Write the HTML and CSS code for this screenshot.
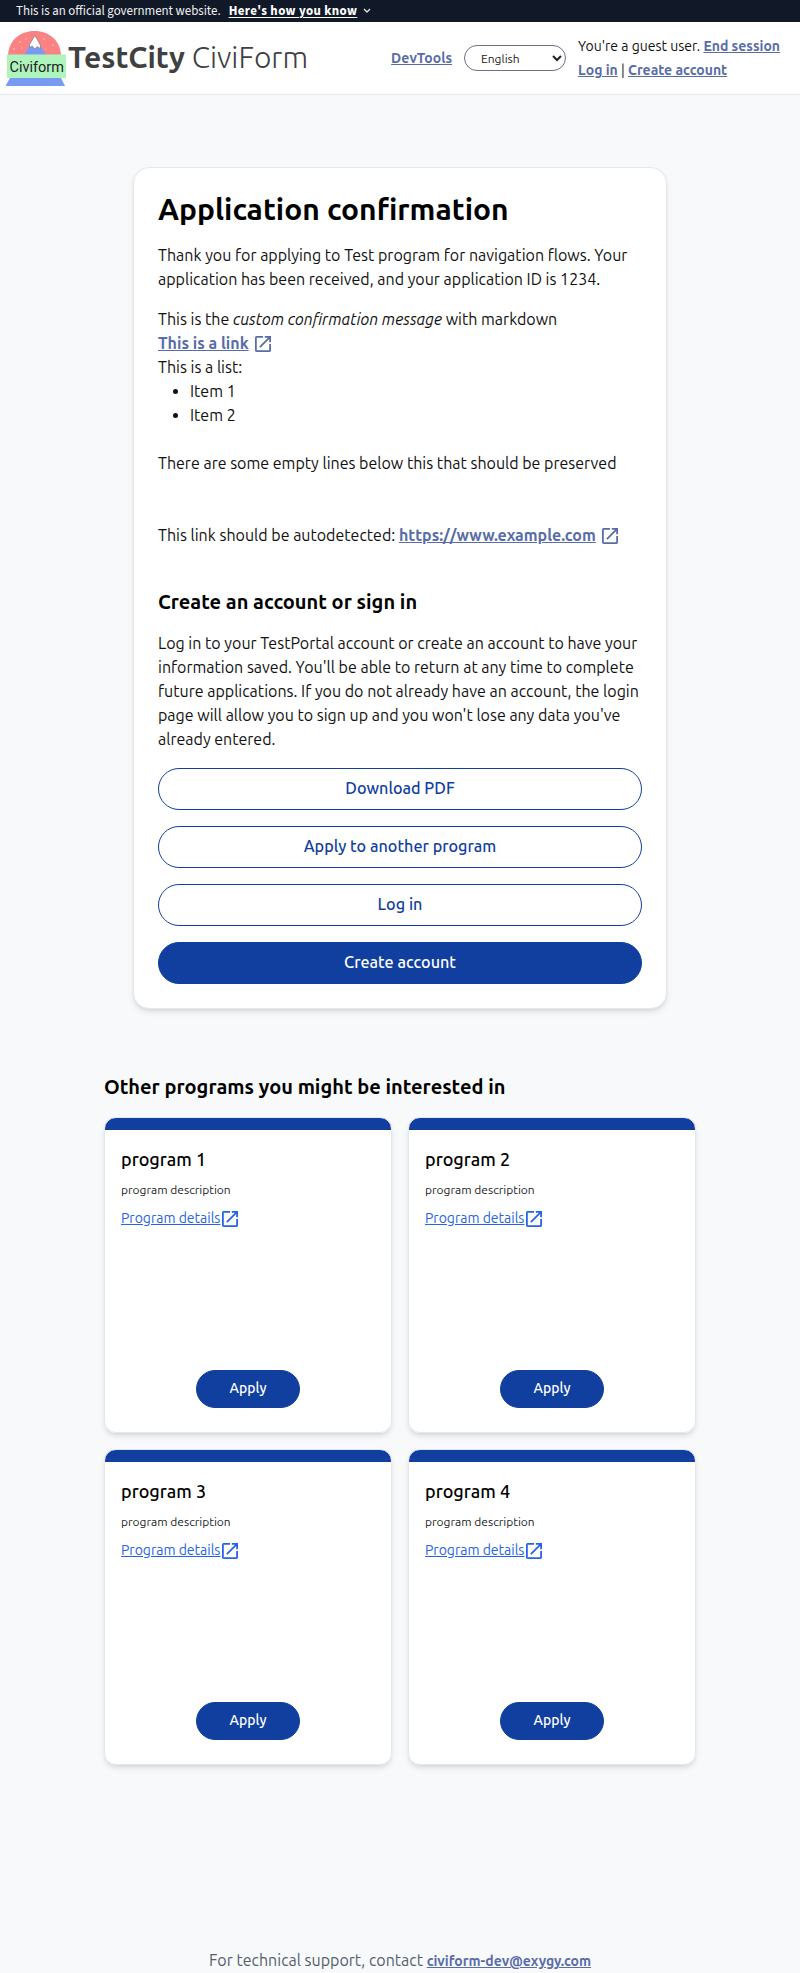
FILE: index.html
```html
<!DOCTYPE html>
<html lang="en">
<head>
<meta charset="utf-8">
<title>Application confirmation</title>
<link rel="stylesheet" href="styles.css">
</head>
<body>
<svg class="sprite" aria-hidden="true">
  <symbol id="open" viewBox="3 3 18 18"><path d="M19 19H5V5h7V3H5a2 2 0 0 0-2 2v14a2 2 0 0 0 2 2h14c1.1 0 2-.9 2-2v-7h-2v7zM14 3v2h3.59l-9.83 9.83 1.41 1.41L19 6.41V10h2V3h-7z"/></symbol>
</svg>
<div class="banner">
  <span>This is an official government website.</span>
  <a class="banner-link" href="#">Here's how you know</a>
  <svg class="chevron" viewBox="0 0 8 6"><path d="M1 1l3 3 3-3"/></svg>
</div>
<header class="header">
  <a class="brand" href="#">
    <svg class="logo" viewBox="0 0 62 56">
      <path fill="#fa8282" d="M3 24C4 9 15 0 29.500 0S55 9 56 24z"/>
      <path fill="#789af3" d="M19.500 24L26 11h7l8 13zM5 47h51l4 8H0.500z"/>
      <path fill="#fff" stroke="#777" stroke-width=".6" d="M30 4.500l5.500 10-.8 3-2.500-2-2.500 2.500-2.500-3-2.200 1.500-.5-3z"/>
      <g fill="#fdc9c9"><circle cx="15" cy="11" r=".8"/><circle cx="21" cy="8" r=".8"/><circle cx="9" cy="18" r=".8"/><circle cx="17" cy="17" r=".8"/><circle cx="39" cy="8" r=".8"/><circle cx="48" cy="14" r=".8"/><circle cx="41" cy="18" r=".8"/></g>
      <path fill="#aef5bd" d="M2 23.500h59V47H2z"/>
      <text x="4.500" y="40.500">Civiform</text>
    </svg>
    <span class="brand-name"><b>TestCity</b> <span>CiviForm</span></span>
  </a>
  <nav class="nav">
    <a class="link" href="#">DevTools</a>
    <select class="language"><option>English</option></select>
    <div class="user">
      <div>You're a guest user. <a class="link" href="#">End session</a></div>
      <div><a class="link" href="#">Log in</a> | <a class="link" href="#">Create account</a></div>
    </div>
  </nav>
</header>
<main>
  <section class="confirmation">
    <h1>Application confirmation</h1>
    <p>Thank you for applying to Test program for navigation flows. Your application has been received, and your application ID is 1234.</p>
    <div class="message">
      <p>This is the <em>custom confirmation message</em> with markdown<br>
      <a class="link" href="#">This is a link</a><svg class="open"><use href="#open"/></svg><br>
      This is a list:</p>
      <ul><li>Item 1</li><li>Item 2</li></ul>
      <p class="gap-above">There are some empty lines below this that should be preserved</p>
      <p class="gap-above-2">This link should be autodetected: <a class="link" href="#">https://www.example.com</a><svg class="open"><use href="#open"/></svg></p>
    </div>
    <h2>Create an account or sign in</h2>
    <p>Log in to your TestPortal account or create an account to have your information saved. You'll be able to return at any time to complete future applications. If you do not already have an account, the login page will allow you to sign up and you won't lose any data you've already entered.</p>
    <div class="actions">
      <button class="button outline">Download PDF</button>
      <button class="button outline">Apply to another program</button>
      <button class="button outline">Log in</button>
      <button class="button">Create account</button>
    </div>
  </section>
  <section class="programs">
    <h2>Other programs you might be interested in</h2>
    <div class="grid">
      <article class="card"><h3>program 1</h3><p>program description</p><a class="details" href="#"><span>Program details</span><svg class="open"><use href="#open"/></svg></a><button class="button apply">Apply</button></article>
      <article class="card"><h3>program 2</h3><p>program description</p><a class="details" href="#"><span>Program details</span><svg class="open"><use href="#open"/></svg></a><button class="button apply">Apply</button></article>
      <article class="card"><h3>program 3</h3><p>program description</p><a class="details" href="#"><span>Program details</span><svg class="open"><use href="#open"/></svg></a><button class="button apply">Apply</button></article>
      <article class="card"><h3>program 4</h3><p>program description</p><a class="details" href="#"><span>Program details</span><svg class="open"><use href="#open"/></svg></a><button class="button apply">Apply</button></article>
    </div>
  </section>
</main>
<footer class="footer">For technical support, contact <a class="link" href="#">civiform-dev@exygy.com</a></footer>
</body>
</html>
```
FILE: styles.css
```css
* { box-sizing: border-box; margin: 0; padding: 0; }
body {
  background: #f8f9fb;
  color: #111;
  font: 400 16px/24px Ubuntu, "Noto Sans", sans-serif;
  min-height: 1973px;
  display: flex;
  flex-direction: column;
}
.sprite { position: absolute; width: 0; height: 0; }
.banner {
  height: 22px;
  padding-left: 16px;
  display: flex;
  align-items: center;
  background: #111827;
  color: #f0f0f0;
  font: 12.9px/22px "Source Sans Pro", "Source Sans 3", "Noto Sans", sans-serif;
}
.banner-link { margin-left: 8px; color: #fff; font-weight: 700; letter-spacing: .4px; text-underline-offset: 2px; }
.chevron { width: 8px; height: 6px; margin-left: 6px; fill: none; stroke: #dfe1e2; stroke-width: 1.4; }
.header {
  height: 73px;
  padding: 0 20px 0 5px;
  display: flex;
  align-items: center;
  justify-content: space-between;
  background: #fff;
  border-bottom: 1px solid #e5e7eb;
}
.brand { display: flex; align-items: center; gap: 1px; color: #404040; text-decoration: none; }
.logo { width: 62px; height: 56px; margin-top: 1px; }
.logo text { font: 14.5px Roboto, sans-serif; fill: #222; }
.brand-name { margin-top: -2px; font-size: 30px; line-height: 36px; font-weight: 300; white-space: nowrap; }
.brand-name b { font-weight: 600; }
.nav { display: flex; align-items: center; gap: 12px; font-size: 14px; white-space: nowrap; }
.link { color: #586ca8; font-weight: 600; }
.language {
  width: 102px; height: 26px;
  padding: 0 0 0 12px;
  border: 1px solid #6b7280; border-radius: 13px;
  background: #fff; color: #222;
  font: 12px Ubuntu, "Noto Sans", sans-serif;
}
.confirmation {
  width: 534px;
  margin: 72px auto 0;
  padding: 23px 24px 24px;
  background: #fff;
  border: 1px solid #e5e7eb;
  border-radius: 16px;
  box-shadow: 0 4px 6px -1px #0000001a, 0 2px 4px -2px #0000001a;
}
h1, h2 { color: #000; font-weight: 600; }
h1 { font-size: 30px; line-height: 36px; margin-bottom: 16px; }
.message { margin-top: 16px; }
.message ul { padding-left: 32px; }
.message .open { width: 16px; height: 16px; margin-left: 6px; vertical-align: -3px; fill: #586ca8; }
.gap-above { margin-top: 24px; }
.gap-above-2 { margin-top: 48px; }
.confirmation h2 { font-size: 20px; line-height: 28px; margin: 41px 0 15px; }
.actions { display: grid; gap: 16px; margin-top: 17px; }
.button {
  height: 42px;
  padding-bottom: 2px;
  border: 1px solid #113f9f;
  border-radius: 21px;
  background: #113f9f;
  color: #fff;
  font: 500 16.2px/24px Ubuntu, "Noto Sans", sans-serif;
}
.outline { background: #fff; color: #113f9f; }
.programs { width: 592px; margin: 64px auto 0; }
.programs h2 { font-size: 20px; line-height: 28px; margin-bottom: 16px; }
.grid { display: grid; grid-template-columns: 1fr 1fr; gap: 16px; }
.card {
  height: 316px;
  padding: 27px 16px 24px;
  display: flex;
  flex-direction: column;
  align-items: flex-start;
  border: 1px solid #e5e7eb;
  border-radius: 12px;
  background: linear-gradient(#113f9f 12px, #fff 12px);
  box-shadow: 0 4px 6px -1px #0000001a, 0 2px 4px -2px #0000001a;
}
.card h3 { color: #000; font-size: 18px; font-weight: 500; line-height: 28px; }
.card p { font-size: 12px; line-height: 16px; margin: 9px 0 8px; color: #222; }
.details { display: flex; align-items: center; gap: 2px; color: #2563eb; font-size: 14px; line-height: 24px; text-decoration: none; }
.details span { text-decoration: underline; }
.details .open { width: 16px; height: 16px; margin-top: 1px; fill: #2563eb; }
.apply { width: 104px; height: 38px; margin: auto auto 0; font-size: 14px; border-radius: 19px; }
.footer { margin-top: auto; text-align: center; color: #555e6b; }
.footer .link { font-size: 14px; }
```
